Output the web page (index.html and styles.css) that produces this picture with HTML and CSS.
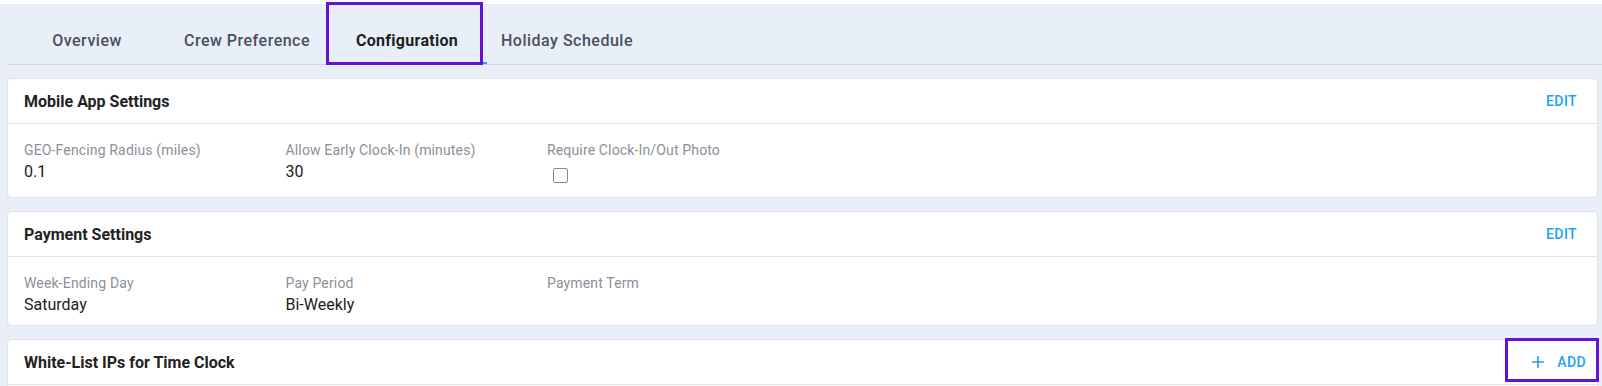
FILE: index.html
```html
<!DOCTYPE html>
<html lang="en">
<head>
    <meta charset="UTF-8">
    <meta name="viewport" content="width=device-width, initial-scale=1.0">
    <title>Configuration</title>
    <link rel="stylesheet" href="styles.css">
</head>
<body>
    <div class="main">
        <div class="tabs">
            <button class="tab">Overview</button>
            <button class="tab">Crew Preference</button>
            <button class="tab active">Configuration</button>
            <button class="tab">Holiday Schedule</button>
        </div>

        <div class="card">
            <div class="card-header">
                <h3>Mobile App Settings</h3>
                <button class="link-btn">EDIT</button>
            </div>
            <div class="card-body">
                <div class="field">
                    <div class="label">GEO-Fencing Radius (miles)</div>
                    <div class="value">0.1</div>
                </div>
                <div class="field">
                    <div class="label">Allow Early Clock-In (minutes)</div>
                    <div class="value">30</div>
                </div>
                <div class="field">
                    <div class="label">Require Clock-In/Out Photo</div>
                    <span class="checkbox"></span>
                </div>
            </div>
        </div>

        <div class="card">
            <div class="card-header">
                <h3>Payment Settings</h3>
                <button class="link-btn">EDIT</button>
            </div>
            <div class="card-body">
                <div class="field">
                    <div class="label">Week-Ending Day</div>
                    <div class="value">Saturday</div>
                </div>
                <div class="field">
                    <div class="label">Pay Period</div>
                    <div class="value">Bi-Weekly</div>
                </div>
                <div class="field">
                    <div class="label">Payment Term</div>
                    <div class="value"></div>
                </div>
            </div>
        </div>

        <div class="card">
            <div class="card-header">
                <h3>White-List IPs for Time Clock</h3>
                <button class="link-btn add-btn">
                    <svg width="12" height="12" viewBox="0 0 12 12"><path d="M6 0v12M0 6h12" stroke="currentColor" stroke-width="1.6"/></svg>
                    ADD
                </button>
            </div>
            <div class="card-body empty"></div>
        </div>
    </div>
</body>
</html>
```

FILE: styles.css
```css
body {
    margin: 0;
    font-family: Roboto, "Liberation Sans", sans-serif;
    background-color: #fff;
    padding-top: 4px;
}
.main {
    background-color: #e8eff8;
    padding: 0 4px 20px 7px;
    min-height: 400px;
}
.tabs {
    display: flex;
    padding-top: 12px;
    margin-right: -4px;
    border-bottom: 1px solid #cfd5dd;
}
.tab {
    position: relative;
    min-width: 160px;
    height: 48px;
    padding: 0 12px;
    border: none;
    background: none;
    font-family: inherit;
    font-size: 16px;
    font-weight: 500;
    letter-spacing: 0.5px;
    color: #4b505c;
    cursor: pointer;
}
.tab.active {
    font-weight: 700;
    letter-spacing: 0.3px;
    color: #1f1f1f;
}
.tab.active::before {
    content: "";
    position: absolute;
    left: 0;
    right: 0;
    bottom: 0;
    height: 2px;
    background-color: #1da1f2;
}
/* highlight frame */
.tab.active::after {
    content: "";
    position: absolute;
    left: -1px;
    top: -14px;
    width: 151px;
    height: 57px;
    border: 3px solid #6711d3;
}
.card {
    background-color: #fff;
    border: 1px solid #dde2e8;
    border-radius: 4px;
    margin-top: 13px;
}
.card-header {
    display: flex;
    align-items: center;
    justify-content: space-between;
    height: 44px;
    padding: 0 11px 0 16px;
    border-bottom: 1px solid #e2e4e7;
}
.card-header h3 {
    margin: 0;
    font-size: 16px;
    font-weight: 700;
    color: #222;
}
.link-btn {
    position: relative;
    display: flex;
    align-items: center;
    gap: 13px;
    padding: 0 9px;
    border: none;
    background: none;
    font-family: inherit;
    font-size: 14px;
    font-weight: 500;
    letter-spacing: 0.4px;
    color: #1da1f2;
    cursor: pointer;
}
.add-btn {
    padding: 0;
}
.add-btn::after {
    content: "";
    position: absolute;
    left: -27px;
    top: -16px;
    width: 88px;
    height: 38px;
    border: 3px solid #6711d3;
}
.card-body {
    display: grid;
    grid-template-columns: repeat(3, 261.5px);
    padding: 16px 16px 8px;
}
.card-body.empty {
    height: 40px;
}
.label {
    font-size: 14px;
    line-height: 20px;
    letter-spacing: 0.15px;
    color: #8b909a;
}
.value {
    font-size: 16px;
    line-height: 24px;
    color: #212121;
}
.checkbox {
    display: block;
    width: 13px;
    height: 13px;
    margin: 8px 0 6px 6px;
    border: 1px solid #8a8a8a;
    border-radius: 2px;
}
```
